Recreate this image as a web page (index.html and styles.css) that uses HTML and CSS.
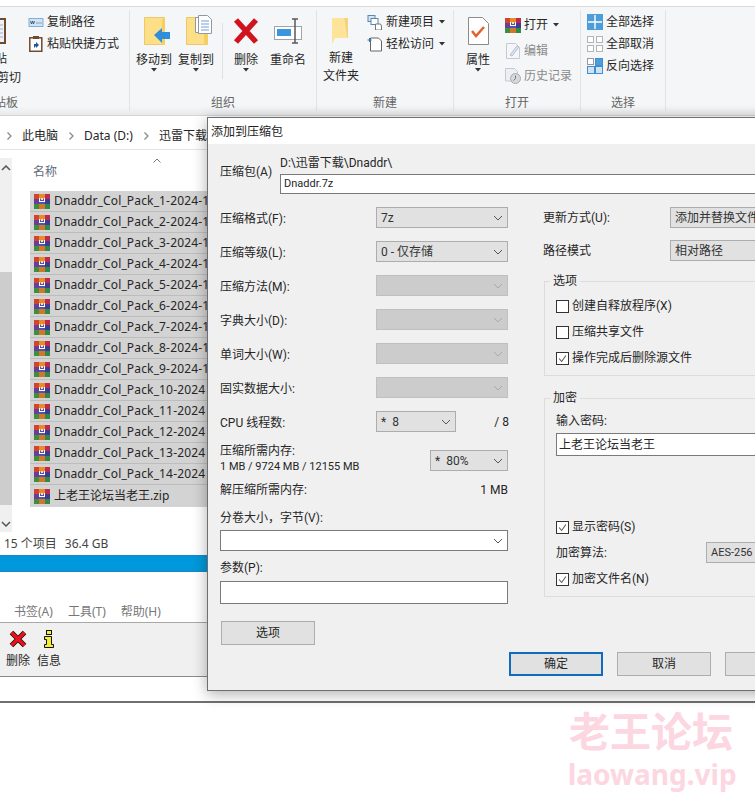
FILE: index.html
```html
<!DOCTYPE html>
<html lang="zh-CN">
<head>
<meta charset="utf-8">
<title>添加到压缩包</title>
<link rel="stylesheet" href="styles.css">
</head>
<body>
<svg class="sprite" aria-hidden="true">
  <symbol id="rar" viewBox="0 0 16 16">
    <rect x="0" y="1" width="5" height="5" fill="#d2452c"/><rect x="5" y="1" width="6" height="5" fill="#ea8a2e"/><rect x="11" y="1" width="5" height="5" fill="#c02a4a"/>
    <rect x="0" y="6" width="5" height="5" fill="#6a3d9a"/><rect x="5" y="6" width="6" height="5" fill="#4a56b0"/><rect x="11" y="6" width="5" height="5" fill="#3f3a94"/>
    <rect x="0" y="11" width="5" height="5" fill="#3d8f3c"/><rect x="5" y="11" width="6" height="5" fill="#d2762c"/><rect x="11" y="11" width="5" height="5" fill="#2f8a48"/>
    <path d="M5 5h1v3h4V5h1v4H5z" fill="#fff"/><rect x="7" y="5" width="2" height="2" fill="#f6e2c0"/>
  </symbol>
  <symbol id="chev" viewBox="0 0 10 6"><path d="M1 1l4 4 4-4" fill="none" stroke="currentColor" stroke-width="1"/></symbol>
  <symbol id="crumb" viewBox="0 0 6 8"><path d="M1.500 .5L5 4 1.500 7.500" fill="none" stroke="#8a8a8a" stroke-width="1.300"/></symbol>
  <symbol id="tick" viewBox="0 0 13 13"><path d="M2.500 6.500l3 3.500 5-7" fill="none" stroke="#555" stroke-width="1.200"/></symbol>
  <symbol id="tri" viewBox="0 0 6 4"><path d="M0 0h6L3 3.500z" fill="#333"/></symbol>
</svg>

<div class="stage">
  <div class="top-gap"></div>

  <section class="ribbon">
    <div class="group g1">
      <div class="group-body">
        <div class="clip-big">
          <svg class="paste-icon" width="7" height="28" viewBox="0 0 7 28"><rect x="-10" y="1" width="16" height="26" fill="#6e4a2e"/><rect x="-10" y="3" width="14" height="22" fill="#eef2f8"/><path d="M-8 8h11M-8 12h11M-8 16h11M-8 20h11" stroke="#9db0c8"/></svg>
          <div class="clip-text clip-paste">粘贴</div>
          <div class="clip-text">剪切</div>
        </div>
        <div class="small-list">
          <div class="small"><svg width="15" height="9" viewBox="0 0 15 9"><rect x=".5" y=".5" width="14" height="8" fill="#cfe3f5" stroke="#7fb0da"/><path d="M2 3l1 3 1-3 1 3 1-3M8 5h1M10 5h1M12 5h1" stroke="#345" fill="none" stroke-width=".8"/></svg><span>复制路径</span></div>
          <div class="small"><svg width="14" height="16" viewBox="0 0 14 16"><rect x=".8" y="1.800" width="12" height="13.500" fill="#fff" stroke="#6e4a2e" stroke-width="1.500"/><rect x="4" y="0" width="6" height="3" fill="#6e4a2e"/><path d="M5 12V8h2V6l3 3-3 3v-2z" fill="#23579a"/></svg><span>粘贴快捷方式</span></div>
        </div>
      </div>
      <div class="group-label label-clip">剪贴板</div>
    </div>

    <div class="group g2">
      <div class="group-body">
        <div class="big">
          <svg class="ic-shift" width="26" height="28" viewBox="0 0 26 28"><path d="M.5.500h20v27H.500z" fill="#fddf88" stroke="#ecc968"/><path d="M18 2h3v26h-3z" fill="#f5cf63"/><path d="M10 18l8-7v4h8v7h-8v4z" fill="#2f8fdc"/></svg>
          <span>移动到</span><svg class="tri" width="6" height="4"><use href="#tri"/></svg>
        </div>
        <div class="big">
          <svg class="ic-shift" width="26" height="30" viewBox="0 0 26 30"><path d="M.5 2.500h21v27H.500z" fill="#fddf88" stroke="#ecc968"/><path d="M18 4h4v26h-4z" fill="#f5cf63"/><path d="M9.500 2.500h8v15h-8z" fill="#fff" stroke="#8f98a5"/><path d="M12.500.5h9l4 4v14h-13z" fill="#fff" stroke="#8f98a5"/><path d="M15 6h8M15 9h8M15 12h8M15 15h8" stroke="#6f9fd8"/></svg>
          <span class="after-tall">复制到</span><svg class="tri" width="6" height="4"><use href="#tri"/></svg>
        </div>
        <div class="vsep"></div>
        <div class="big">
          <svg width="26" height="28" viewBox="0 0 26 28"><path d="M3 3l20 22M23 3L3 25" stroke="#d1121f" stroke-width="5.500"/></svg>
          <span>删除</span><svg class="tri" width="6" height="4"><use href="#tri"/></svg>
        </div>
        <div class="big">
          <svg width="28" height="28" viewBox="0 0 28 28"><rect x=".5" y="9.500" width="27" height="13" fill="#fff" stroke="#9aa5b1"/><rect x="3" y="12" width="14" height="7" fill="#3c96dc"/><path d="M18 2h3v24h-3M24 2h-3M24 26h-3" stroke="#5a5a5a" stroke-width="1.500" fill="none"/></svg>
          <span>重命名</span>
        </div>
      </div>
      <div class="group-label">组织</div>
    </div>

    <div class="group g3">
      <div class="group-body">
        <div class="big big-tall">
          <svg width="20" height="28" viewBox="0 0 20 28"><path d="M1 1h12l3 20H4l-3 6z" fill="#fde49a"/><path d="M13 1h4v20h-1z" fill="#f6d37a"/></svg>
          <span>新建<br>文件夹</span>
        </div>
        <div class="small-list">
          <div class="small"><svg width="15" height="15" viewBox="0 0 15 15"><rect x=".5" y=".5" width="7" height="6" fill="#d3e6f7" stroke="#5a87ad"/><rect x="3.500" y="3.500" width="7" height="6" fill="#fff" stroke="#5a87ad"/><path d="M8 9h5l1 2v4H8z" fill="#fff" stroke="#777"/></svg><span>新建项目</span><svg class="tri-inline" width="6" height="4"><use href="#tri"/></svg></div>
          <div class="small"><svg width="15" height="15" viewBox="0 0 15 15"><path d="M3 1h8l3 3v10H3z" fill="#fff" stroke="#666"/><path d="M0 3h4M2 1v4" stroke="#2d78b8"/></svg><span>轻松访问</span><svg class="tri-inline" width="6" height="4"><use href="#tri"/></svg></div>
        </div>
      </div>
      <div class="group-label">新建</div>
    </div>

    <div class="group g4">
      <div class="group-body">
        <div class="big">
          <svg width="21" height="28" viewBox="0 0 21 28"><path d="M.5.500h14l6 6v21H.500z" fill="#fff" stroke="#8b8b8b"/><path d="M4 14l4 5 8-9" fill="none" stroke="#e2622b" stroke-width="2.500"/></svg>
          <span>属性</span><svg class="tri" width="6" height="4"><use href="#tri"/></svg>
        </div>
        <div class="small-list open-list">
          <div class="small small-open"><svg width="16" height="16"><use href="#rar"/></svg><span>打开</span><svg class="tri-inline" width="6" height="4"><use href="#tri"/></svg></div>
          <div class="small small-open muted"><svg width="14" height="16" viewBox="0 0 14 16"><path d="M.5.500h9l4 4v11H.500z" fill="#f4f6fa" stroke="#c3cad6"/><path d="M4 12l7-9 2 1-7 9z" fill="#dfe5ee" stroke="#b5bdca"/></svg><span>编辑</span></div>
          <div class="small small-open muted"><svg width="16" height="16" viewBox="0 0 16 16"><path d="M.5.500h9l3 3V13H.500z" fill="#eceff4" stroke="#c3cad6"/><circle cx="10.500" cy="10.500" r="5" fill="#d5d8dd" stroke="#aaa"/><path d="M10.500 7.500v3l-2 2" stroke="#777" fill="none"/></svg><span>历史记录</span></div>
        </div>
      </div>
      <div class="group-label">打开</div>
    </div>

    <div class="group g5">
      <div class="group-body">
        <div class="small-list">
          <div class="small"><svg width="16" height="16" viewBox="0 0 16 16"><rect width="16" height="16" fill="#4d9ddb"/><path d="M8 1v14M1 8h14" stroke="#fff" stroke-width="1.400"/></svg><span>全部选择</span></div>
          <div class="small"><svg width="16" height="16" viewBox="0 0 16 16"><g fill="#fff" stroke="#b5b5b5"><rect x=".5" y=".5" width="6" height="6"/><rect x="9.500" y=".5" width="6" height="6"/><rect x=".5" y="9.500" width="6" height="6"/><rect x="9.500" y="9.500" width="6" height="6"/></g></svg><span>全部取消</span></div>
          <div class="small"><svg width="16" height="16" viewBox="0 0 16 16"><g stroke="#3f8fd0"><rect x="8.500" y=".5" width="7" height="7" fill="#4d9ddb"/><rect x=".5" y="8.500" width="7" height="7" fill="#cfe3f5"/><rect x="8.500" y="8.500" width="7" height="7" fill="#cfe3f5"/></g><rect x=".5" y=".5" width="6" height="6" fill="#fff" stroke="#999"/></svg><span>反向选择</span></div>
        </div>
      </div>
      <div class="group-label">选择</div>
    </div>
  </section>

  <nav class="crumbs">
    <svg width="6" height="8"><use href="#crumb"/></svg><span>此电脑</span>
    <svg width="6" height="8"><use href="#crumb"/></svg><span>Data (D:)</span>
    <svg width="6" height="8"><use href="#crumb"/></svg><span>迅雷下载</span>
  </nav>

  <section class="content">
    <div class="scroll">
      <svg class="scroll-arrow" width="10" height="6" viewBox="0 0 10 6"><path d="M1 5l4-4 4 4" fill="none" stroke="#555" stroke-width="1.500"/></svg>
      <div class="thumb"></div>
      <svg class="scroll-arrow" width="10" height="6" viewBox="0 0 10 6"><path d="M1 1l4 4 4-4" fill="none" stroke="#555" stroke-width="1.500"/></svg>
    </div>
    <div class="files">
      <div class="file-head"><span class="head-name">名称</span><svg class="sort" width="8" height="5" viewBox="0 0 8 5"><path d="M.5 4.500L4 1l3.500 3.500" fill="none" stroke="#777"/></svg></div>
      <div class="file"><svg width="16" height="16"><use href="#rar"/></svg><span>Dnaddr_Col_Pack_1-2024-1</span></div>
      <div class="file"><svg width="16" height="16"><use href="#rar"/></svg><span>Dnaddr_Col_Pack_2-2024-1</span></div>
      <div class="file"><svg width="16" height="16"><use href="#rar"/></svg><span>Dnaddr_Col_Pack_3-2024-1</span></div>
      <div class="file"><svg width="16" height="16"><use href="#rar"/></svg><span>Dnaddr_Col_Pack_4-2024-1</span></div>
      <div class="file"><svg width="16" height="16"><use href="#rar"/></svg><span>Dnaddr_Col_Pack_5-2024-1</span></div>
      <div class="file"><svg width="16" height="16"><use href="#rar"/></svg><span>Dnaddr_Col_Pack_6-2024-1</span></div>
      <div class="file"><svg width="16" height="16"><use href="#rar"/></svg><span>Dnaddr_Col_Pack_7-2024-1</span></div>
      <div class="file"><svg width="16" height="16"><use href="#rar"/></svg><span>Dnaddr_Col_Pack_8-2024-1</span></div>
      <div class="file"><svg width="16" height="16"><use href="#rar"/></svg><span>Dnaddr_Col_Pack_9-2024-1</span></div>
      <div class="file"><svg width="16" height="16"><use href="#rar"/></svg><span>Dnaddr_Col_Pack_10-2024</span></div>
      <div class="file"><svg width="16" height="16"><use href="#rar"/></svg><span>Dnaddr_Col_Pack_11-2024</span></div>
      <div class="file"><svg width="16" height="16"><use href="#rar"/></svg><span>Dnaddr_Col_Pack_12-2024</span></div>
      <div class="file"><svg width="16" height="16"><use href="#rar"/></svg><span>Dnaddr_Col_Pack_13-2024</span></div>
      <div class="file"><svg width="16" height="16"><use href="#rar"/></svg><span>Dnaddr_Col_Pack_14-2024</span></div>
      <div class="file"><svg width="16" height="16"><use href="#rar"/></svg><span>上老王论坛当老王.zip</span></div>
    </div>
  </section>

  <div class="status"><span>15 个项目</span><span>36.4 GB</span></div>
  <div class="bluebar"></div>

  <div class="menu"><span>书签(A)</span><span>工具(T)</span><span>帮助(H)</span></div>
  <div class="toolbar">
    <div class="tool">
      <svg width="18" height="18" viewBox="0 0 18 18"><path d="M2.500 2.500l13 13M15.500 2.500l-13 13" stroke="#111" stroke-width="5"/><path d="M2.500 2.500l13 13M15.500 2.500l-13 13" stroke="#e8121c" stroke-width="3.500"/></svg>
      <span>删除</span>
    </div>
    <div class="tool">
      <svg width="12" height="18" viewBox="0 0 12 18"><rect x="3.500" y=".5" width="5" height="4" fill="#f6ee30" stroke="#111"/><path d="M1.500 6.500h7v8h2v3h-9v-3h2v-5h-2z" fill="#f6ee30" stroke="#111"/></svg>
      <span>信息</span>
    </div>
  </div>
  <div class="lower-blank"></div>
  <div class="lower-edge"></div>

  <aside class="dialog">
    <div class="dlg-title">添加到压缩包</div>
    <div class="dlg-body">
      <div class="archive">
        <div class="archive-label">压缩包(A)</div>
        <div class="archive-fields">
          <div class="archive-path">D:\迅雷下载\Dnaddr\</div>
          <div class="textbox archive-name lat">Dnaddr.7z</div>
        </div>
      </div>

      <div class="cols">
        <div class="col-left">
          <div class="row"><span>压缩格式(F):</span><div class="select s-main"><span>7z</span><svg width="10" height="6"><use href="#chev"/></svg></div></div>
          <div class="row row-level"><span>压缩等级(L):</span><div class="select s-main"><span>0 - 仅存储</span><svg width="10" height="6"><use href="#chev"/></svg></div></div>
          <div class="row"><span>压缩方法(M):</span><div class="select s-main off"><span></span><svg width="10" height="6"><use href="#chev"/></svg></div></div>
          <div class="row"><span>字典大小(D):</span><div class="select s-main off"><span></span><svg width="10" height="6"><use href="#chev"/></svg></div></div>
          <div class="row"><span>单词大小(W):</span><div class="select s-main off"><span></span><svg width="10" height="6"><use href="#chev"/></svg></div></div>
          <div class="row"><span>固实数据大小:</span><div class="select s-main off"><span></span><svg width="10" height="6"><use href="#chev"/></svg></div></div>
          <div class="row row-cpu"><span>CPU 线程数:</span><div class="select s-cpu"><span class="star">* 8</span><svg width="10" height="6"><use href="#chev"/></svg></div><span class="cpu-max">/ 8</span></div>
          <div class="mem">
            <div class="mem-text"><div>压缩所需内存:</div><div class="lat">1 MB / 9724 MB / 12155 MB</div></div>
            <div class="select s-mem"><span class="star">* 80%</span><svg width="10" height="6"><use href="#chev"/></svg></div>
          </div>
          <div class="line unpack"><span>解压缩所需内存:</span><span>1 MB</span></div>
          <div class="line split-label">分卷大小，字节(V):</div>
          <div class="select s-combo"><span></span><svg width="10" height="6"><use href="#chev"/></svg></div>
          <div class="line params-label">参数(P):</div>
          <div class="textbox params"></div>
          <div class="btn btn-options">选项</div>
        </div>

        <div class="col-right">
          <div class="row-r"><span>更新方式(U):</span><div class="select s-wide"><span>添加并替换文件</span></div></div>
          <div class="row-r row-r2"><span>路径模式</span><div class="select s-wide"><span>相对路径</span></div></div>
          <fieldset class="box box-opt">
            <legend>选项</legend>
            <div class="check"><i class="cb"></i><span>创建自释放程序(X)</span></div>
            <div class="check"><i class="cb"></i><span>压缩共享文件</span></div>
            <div class="check"><i class="cb"><svg width="11" height="11"><use href="#tick"/></svg></i><span>操作完成后删除源文件</span></div>
          </fieldset>
          <fieldset class="box box-enc">
            <legend>加密</legend>
            <div class="line">输入密码:</div>
            <div class="textbox pwd">上老王论坛当老王</div>
            <div class="check check-show"><i class="cb"><svg width="11" height="11"><use href="#tick"/></svg></i><span>显示密码(S)</span></div>
            <div class="algo"><span>加密算法:</span><div class="select s-algo lat"><span>AES-256</span></div></div>
            <div class="check check-names"><i class="cb"><svg width="11" height="11"><use href="#tick"/></svg></i><span>加密文件名(N)</span></div>
          </fieldset>
        </div>
      </div>

      <div class="dlg-foot">
        <div class="btn btn-ok">确定</div>
        <div class="btn">取消</div>
        <div class="btn"></div>
      </div>
    </div>
  </aside>

  <div class="watermark">
    <div class="wm-cn">老王论坛</div>
    <div class="wm-en">laowang.vip</div>
  </div>
</div>
</body>
</html>
```

FILE: styles.css
```css
* { box-sizing: border-box; }
html, body { margin: 0; padding: 0; background: #fff; }
body { font: 12px/14px "Noto Sans", "Noto Sans CJK SC", sans-serif; color: #262626; }
.sprite { position: absolute; width: 0; height: 0; }
.stage { position: relative; width: 755px; height: 798px; overflow: hidden; background: #fff; }
.top-gap { height: 6px; }

/* ribbon */
.ribbon { display: flex; height: 110px; padding-top: 3px; border-top: 1px solid #dadbdc; border-bottom: 1px solid #d4d5d6; background: linear-gradient(#f5f6f7 92%, #e9eaeb); }
.group { display: flex; flex-direction: column; height: 101px; border-right: 1px solid #e2e3e5; flex: none; }
.g1 { width: 130px; }
.g2 { width: 187px; }
.g3 { width: 137px; }
.g4 { width: 127px; }
.g5 { width: 85px; }
.g2 .group-body, .g3 .group-body, .g4 .group-body { padding-left: 3px; }
.g5 .group-body { padding-left: 6px; }
.group-body { flex: 1; display: flex; min-height: 0; }
.group-label { height: 16px; line-height: 16px; text-align: center; color: #666; }
.label-clip { width: 18px; display: flex; justify-content: flex-end; overflow: hidden; white-space: nowrap; }

.clip-big { width: 21px; overflow: hidden; padding-top: 7px; }
.paste-icon { display: block; }
.clip-text { display: flex; justify-content: flex-end; line-height: 19px; white-space: nowrap; }
.clip-paste { padding-right: 14px; margin-top: 4px; }
.small-list { display: flex; flex-direction: column; padding-top: 1px; margin-left: 7px; }
.small { display: flex; align-items: center; height: 22px; white-space: nowrap; }
.small > svg:first-child { flex: none; width: 16px; margin-right: 3px; }
.tri-inline { margin-left: 5px; }
.big { width: 42px; display: flex; flex-direction: column; align-items: center; padding-top: 7px; text-align: center; white-space: nowrap; flex: none; }
.big > svg:first-child { flex: none; height: 28px; }
.big > svg.ic-shift { margin-left: 6px; }
.big > svg[height="30"] { height: 30px; margin-top: -2px; }
.big > span { margin-top: 7px; line-height: 15px; }
.tri { margin-top: 1px; }
.vsep { width: 1px; height: 56px; margin: 13px 2px 0 5px; background: #dfe0e2; flex: none; }
.big-tall > span { margin-top: 4px; line-height: 18px; }
.g3 .small-list { margin-left: 5px; }
.g4 .small-list { margin-left: 6px; }
.g5 .small-list { margin-left: 0; }
.open-list { padding-top: 2px; }
.small-open { height: 26px; }
.small-open:nth-child(2), .small-open:last-child { height: 25px; }
.muted { color: #8a8a8a; }

/* breadcrumb */
.crumbs { display: flex; align-items: center; height: 34px; padding: 6px 0 0 6px; border-bottom: 1px solid #e4e4e4; white-space: nowrap; }
.crumbs svg { margin: 0 10px 0 0; flex: none; }
.crumbs span { margin-right: 10px; }

/* file list */
.content { display: flex; height: 387px; }
.scroll { width: 12px; height: 374px; margin-top: 8px; background: #f0f0f0; display: flex; flex-direction: column; align-items: center; flex: none; }
.scroll-arrow { margin-top: 7px; flex: none; }
.thumb { width: 12px; height: 233px; margin-top: 101px; background: #cdcdcd; }
.scroll .thumb + .scroll-arrow { margin-top: 16px; }
.files { width: 177px; margin-left: 18px; overflow: hidden; }
.file-head { position: relative; height: 41px; padding: 15px 0 0 3px; color: #5f6b7a; }
.sort { position: absolute; left: 123px; top: 8px; }
.file { display: flex; align-items: center; height: 21px; padding-left: 4px; background: #d3d3d3; border-bottom: 1px solid #bdbdbd; white-space: nowrap; letter-spacing: .15px; }
.file:last-child { border-bottom: 0; height: 22px; letter-spacing: 0; }
.file svg { flex: none; margin-right: 4px; }
.status { display: flex; gap: 8px; height: 14px; padding-left: 4px; color: #444; }
.bluebar { height: 17px; margin-top: 4px; background: linear-gradient(#1f86bd, #0098dc 12%, #0098dc 88%, #1f86bd); }

/* lower window */
.menu { display: flex; gap: 15px; height: 51px; padding: 33px 0 0 14px; border-bottom: 1px solid #a8a8a8; color: #777; }
.toolbar { display: flex; height: 54px; padding: 7px 0 0 6px; background: #f0f0f0; border-bottom: 1px solid #8a8a8a; gap: 7px; }
.tool { display: flex; flex-direction: column; align-items: center; width: 24px; gap: 6px; white-space: nowrap; }
.lower-blank { height: 24px; }
.lower-edge { height: 2px; background: #707070; }

/* dialog */
.dialog { position: absolute; left: 207px; top: 117px; width: 640px; height: 574px; background: #f0f0f0; border: 1px solid #6f6f6f; box-shadow: 0 3px 14px rgba(0, 0, 0, .32); font-family: Roboto, "Noto Sans CJK SC", sans-serif; }
.dlg-title { height: 26px; padding: 7px 0 0 3px; background: #fff; color: #222; }
.dlg-body { padding: 12px 0 0 12px; }
.archive { display: flex; }
.archive-label { width: 60px; padding-top: 9px; }
.archive-path { height: 18px; }
.archive-name { width: 500px; height: 20px; }
.textbox { background: #fff; border: 1px solid #7a7a7a; padding: 2px 3px; white-space: nowrap; }
.cols { display: flex; margin-top: 13px; }
.col-left { width: 288px; flex: none; }
.col-right { width: 320px; margin-left: 35px; flex: none; }
.row { display: flex; align-items: center; justify-content: space-between; height: 21px; margin-bottom: 13px; }
.row > span:first-child { position: relative; top: 1px; }
.row-level { margin-top: 1px; }
.select { display: flex; align-items: center; justify-content: space-between; height: 21px; padding: 0 4px; background: #e1e1e1; border: 1px solid #adadad; color: #333; white-space: nowrap; flex: none; }
.select svg { color: #555; flex: none; }
.star { word-spacing: 3px; }
.s-main { width: 132px; }
.off { background: #cccccc; border-color: #bfbfbf; }
.off svg { color: #aaa; }
.s-cpu { width: 80px; margin-left: auto; margin-right: 52px; }
.row-cpu { position: relative; margin-bottom: 12px; }
.cpu-max { position: absolute; right: -1px; }
.mem { display: flex; align-items: flex-end; justify-content: space-between; height: 30px; }
.mem-text div:first-child { height: 16px; }
.lat { font-size: 11px; }
.s-mem { width: 78px; margin-bottom: 3px; }
.line { height: 14px; white-space: nowrap; }
.unpack { display: flex; justify-content: space-between; margin-top: 9px; }
.split-label { margin-top: 14px; }
.s-combo { width: 288px; margin-top: 5px; background: #fff; border-color: #7a7a7a; }
.params-label { margin-top: 10px; }
.params { width: 288px; height: 23px; margin-top: 6px; }
.btn { width: 94px; height: 24px; line-height: 22px; text-align: center; background: #e1e1e1; border: 1px solid #adadad; flex: none; }
.btn-options { margin: 17px 0 0 1px; }
.dlg-foot { display: flex; gap: 14px; margin: 7px 0 0 289px; }
.btn-ok { border: 2px solid #0f6cbd; line-height: 20px; }

.row-r { display: flex; align-items: center; height: 21px; }
.row-r > span { width: 127px; flex: none; }
.row-r2 { margin-top: 12px; }
.s-wide { width: 150px; justify-content: flex-start; }
.box { margin: 13px 0 0 1px; padding: 11px 0 10px 11px; border: 1px solid #dcdcdc; min-width: 0; width: 300px; }
.box legend { margin-left: -6px; padding: 0 3px; line-height: 14px; }
.box-enc { margin-top: 15px; padding-top: 9px; padding-bottom: 10px; }
.check { display: flex; align-items: center; height: 14px; margin-bottom: 12px; white-space: nowrap; }
.check:last-child { margin-bottom: 0; }
.cb { display: flex; align-items: center; justify-content: center; width: 13px; height: 13px; margin-right: 3px; background: #fff; border: 1px solid #333; flex: none; }
.pwd { width: 280px; height: 23px; margin-top: 5px; padding: 4px 2px 0; }
.check-show { margin-top: 64px; margin-bottom: 0; }
.algo { display: flex; align-items: center; height: 21px; margin-top: 8px; }
.algo > span { width: 150px; flex: none; }
.s-algo { width: 90px; justify-content: flex-start; }
.check-names { margin-top: 9px; margin-bottom: 0; }

/* watermark */
.watermark { position: absolute; left: 566px; top: 706px; width: 170px; text-align: center; color: #fcd6e1; font-weight: 700; }
.wm-cn { font-size: 41px; line-height: 50px; white-space: nowrap; }
.wm-en { font-size: 28px; line-height: 36px; white-space: nowrap; margin-left: 2px; }
```
